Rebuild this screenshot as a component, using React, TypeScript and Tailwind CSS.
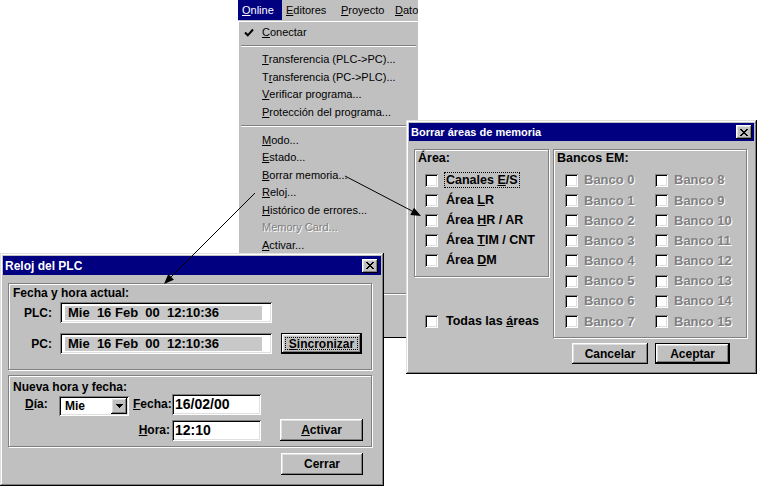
import React from "react";

const frameWin =
  "shadow-[inset_-1px_-1px_0_#000,inset_1px_1px_0_#dfdfdf,inset_-2px_-2px_0_#808080,inset_2px_2px_0_#fff]";
const raised =
  "shadow-[inset_-1px_-1px_0_#000,inset_1px_1px_0_#fff,inset_-2px_-2px_0_#808080,inset_2px_2px_0_#dfdfdf]";
const sunken =
  "shadow-[inset_1px_1px_0_#808080,inset_-1px_-1px_0_#fff,inset_2px_2px_0_#000,inset_-2px_-2px_0_#dfdfdf]";
const etched = "border border-[#808080] shadow-[inset_1px_1px_0_#fff,1px_1px_0_#fff]";
const disabled = "text-[#808080] [text-shadow:1px_1px_0_#fff]";

function CloseBtn() {
  return (
    <div className={`w-[16px] h-[14px] bg-[#c0c0c0] flex items-center justify-center ${raised}`}>
      <svg width="8" height="7" viewBox="0 0 8 7" shapeRendering="crispEdges">
        <path d="M0 0h2v1h-2zM6 0h2v1h-2zM1 1h2v1h-2zM5 1h2v1h-2zM2 2h4v1h-4zM3 3h2v1h-2zM2 4h4v1h-4zM1 5h2v1h-2zM5 5h2v1h-2zM0 6h2v1h-2zM6 6h2v1h-2z" fill="#000" />
      </svg>
    </div>
  );
}

function Check() {
  return <span className={`inline-block w-[13px] h-[13px] bg-white shrink-0 ${sunken}`} />;
}

function Button({
  children,
  className = "",
  def = false,
  focus = false,
}: {
  children: React.ReactNode;
  className?: string;
  def?: boolean;
  focus?: boolean;
}) {
  return (
    <div className={`${def ? "border border-black" : ""} ${className} flex`}>
      <div className={`flex-1 bg-[#c0c0c0] flex items-center justify-center ${raised} p-[3px]`}>
        <div
          className={`w-full h-full flex items-center justify-center text-[12px] font-bold ${
            focus ? "border border-dotted border-black" : ""
          }`}
        >
          {children}
        </div>
      </div>
    </div>
  );
}

function MenuItem({ children, dis = false }: { children: React.ReactNode; dis?: boolean }) {
  return (
    <div className={`h-[17.6px] flex items-center pl-[23px] whitespace-nowrap ${dis ? disabled : ""}`}>
      {children}
    </div>
  );
}

function MenuSep() {
  return (
    <div className="h-[10px] flex items-center px-[2px]">
      <div className="w-full h-[2px] border-t border-t-[#808080] border-b border-b-white" />
    </div>
  );
}

function Menu() {
  return (
    <div className="absolute left-[238px] top-0 w-[180px] h-[338px] bg-[#c0c0c0] overflow-hidden text-[11px] text-black">
      <div className="flex h-[21px] items-stretch whitespace-nowrap">
        <div className="w-[44px] pl-[4px] bg-[#000080] text-white flex items-center h-[20px] shrink-0">
          <u>O</u>nline
        </div>
        <div className="w-[57px] pl-[4px] flex items-center h-[20px] shrink-0">
          <u>E</u>ditores
        </div>
        <div className="w-[56px] pl-[2px] flex items-center h-[20px] shrink-0">
          <u>P</u>royecto
        </div>
        <div className="pl-[0px] flex items-center h-[20px] shrink-0">
          <u>D</u>atos
        </div>
      </div>
      <div className="h-[317px] border-t border-l border-t-white border-l-white border-b border-b-black pt-[1px] relative">
        <div className="h-[17.6px] flex items-center pl-[23px] relative">
          <svg className="absolute left-[5px] top-[5px]" width="10" height="9" viewBox="0 0 10 9">
            <path d="M1 4.5 L3.8 7.3 L9 1.5" stroke="#000" strokeWidth="2" fill="none" />
          </svg>
          <span>
            <u>C</u>onectar
          </span>
        </div>
        <MenuSep />
        <MenuItem>
          <u>T</u>ransferencia (PLC-&gt;PC)...
        </MenuItem>
        <MenuItem>
          T<u>r</u>ansferencia (PC-&gt;PLC)...
        </MenuItem>
        <MenuItem>
          <u>V</u>erificar programa...
        </MenuItem>
        <MenuItem>
          <u>P</u>rotección del programa...
        </MenuItem>
        <MenuSep />
        <MenuItem>
          <u>M</u>odo...
        </MenuItem>
        <MenuItem>
          <u>E</u>stado...
        </MenuItem>
        <MenuItem>
          <u>B</u>orrar memoria...
        </MenuItem>
        <MenuItem>
          <u>R</u>eloj...
        </MenuItem>
        <MenuItem>
          <u>H</u>istórico de errores...
        </MenuItem>
        <MenuItem dis>Memory Card...</MenuItem>
        <MenuItem>
          <u>A</u>ctivar...
        </MenuItem>
        <MenuItem>Desactivar...</MenuItem>
        <MenuItem>Configuración...</MenuItem>
        <MenuSep />
        <MenuItem>Opciones...</MenuItem>
        <MenuItem>Información...</MenuItem>
      </div>
    </div>
  );
}

function RelojDialog() {
  return (
    <div
      className={`absolute left-0 top-[253px] w-[384px] h-[233px] bg-[#c0c0c0] p-[3px] ${frameWin} text-black`}
    >
      <div className="h-[19px] bg-[#000080] flex items-center justify-between pl-[2px] pr-[3px]">
        <span className="text-white font-bold text-[12px]">Reloj del PLC</span>
        <CloseBtn />
      </div>
      <div className="px-[5px] pt-[8px] flex flex-col">
        <div className={`w-[364px] h-[87px] ${etched} flex flex-col`}>
          <div className="pt-[2px] pl-[4px] leading-[14px] text-[12px] font-bold">Fecha y hora actual:</div>
          <div className="mt-[2px] flex items-center h-[21px]">
            <div className="w-[43px] text-right text-[12px] font-bold">PLC:</div>
            <div className={`ml-[8px] w-[212px] h-[21px] bg-white ${sunken} pt-[4px] pr-[10px] pb-[3px] pl-[5px]`}>
              <div className="bg-[#c8c8c8] h-full flex items-center pl-[3px] text-[13px] font-bold whitespace-pre">
                Mie  16 Feb  00  12:10:36
              </div>
            </div>
          </div>
          <div className="mt-[10px] flex items-center h-[21px]">
            <div className="w-[43px] text-right text-[12px] font-bold">PC:</div>
            <div className={`ml-[8px] w-[212px] h-[21px] bg-white ${sunken} pt-[4px] pr-[10px] pb-[3px] pl-[5px]`}>
              <div className="bg-[#c8c8c8] h-full flex items-center pl-[3px] text-[13px] font-bold whitespace-pre">
                Mie  16 Feb  00  12:10:36
              </div>
            </div>
            <Button className="ml-[9px] w-[81px] h-[21px]" def focus>
              <u>S</u>incronizar
            </Button>
          </div>
        </div>
        <div className={`mt-[5px] w-[364px] h-[72px] ${etched} flex flex-col`}>
          <div className="pt-[4px] pl-[4px] leading-[14px] text-[12px] font-bold">Nueva hora y fecha:</div>
          <div className="flex items-start h-[21px]">
            <div className="w-[50px] pl-[16px] leading-[21px] text-[12px] font-bold">
              <u>D</u>ía:
            </div>
            <div className={`mt-[2px] w-[70px] h-[20px] bg-white ${sunken} p-[2px] flex items-stretch`}>
              <div className="flex-1 flex items-center pl-[4px] text-[12px] font-bold">Mie</div>
              <div className={`w-[16px] bg-[#c0c0c0] ${raised} flex items-center justify-center`}>
                <svg width="7" height="4" viewBox="0 0 7 4" shapeRendering="crispEdges">
                  <path d="M0 0h7v1h-7zM1 1h5v1h-5zM2 2h3v1h-3zM3 3h1v1h-1z" fill="#000" />
                </svg>
              </div>
            </div>
            <div className="ml-[4px] w-[39px] leading-[21px] text-[12px] font-bold">
              <u>F</u>echa:
            </div>
            <div className={`w-[89px] h-[21px] bg-white ${sunken} flex items-center pl-[3px] text-[14px] font-bold`}>
              16/02/00
            </div>
          </div>
          <div className="mt-[5px] flex items-start h-[21px]">
            <div className="w-[124px]" />
            <div className="w-[39px] text-right pr-[2px] leading-[21px] text-[12px] font-bold">
              <u>H</u>ora:
            </div>
            <div className={`w-[89px] h-[21px] bg-white ${sunken} flex items-center pl-[3px] text-[14px] font-bold`}>
              12:10
            </div>
            <Button className="ml-[19px] -mt-[1px] w-[83px] h-[22px]">
              <u>A</u>ctivar
            </Button>
          </div>
        </div>
        <Button className="mt-[6px] ml-[273px] w-[82px] h-[22px]">Cerrar</Button>
      </div>
    </div>
  );
}

function BorrarDialog() {
  const areas: React.ReactNode[] = [
    <span className="border border-dotted border-black px-[1px] -ml-[2px]">
      Canales <u>E</u>/S
    </span>,
    <span>
      Área <u>L</u>R
    </span>,
    <span>
      Área <u>H</u>R / AR
    </span>,
    <span>
      Área <u>T</u>IM / CNT
    </span>,
    <span>
      Área <u>D</u>M
    </span>,
  ];
  const bancos = Array.from({ length: 16 }, (_, i) => i);
  return (
    <div
      className={`absolute left-[406px] top-[120px] w-[351px] h-[254px] bg-[#c0c0c0] p-[3px] ${frameWin} text-black`}
    >
      <div className="h-[18px] bg-[#000080] flex items-center justify-between pl-[2px] pr-[2px]">
        <span className="text-white font-bold text-[11px]">Borrar áreas de memoria</span>
        <CloseBtn />
      </div>
      <div className="flex pl-[5px] pt-[8px] gap-[4px] text-[12.5px] font-bold">
        <div className="w-[135px] flex flex-col">
          <div className={`h-[128px] ${etched} flex flex-col`}>
            <div className="pt-[1px] pl-[3px] leading-[14px]">Área:</div>
            <div className="mt-[5px] flex flex-col">
              {areas.map((a, i) => (
                <div key={i} className="h-[20.2px] flex items-center pl-[10px]">
                  <Check />
                  <span className="ml-[8px] whitespace-nowrap">{a}</span>
                </div>
              ))}
            </div>
          </div>
          <div className="mt-[34px] h-[20px] flex items-center pl-[11px]">
            <Check />
            <span className="ml-[8px] whitespace-nowrap">
              Todas las <u>á</u>reas
            </span>
          </div>
        </div>
        <div className="w-[194px] flex flex-col">
          <div className={`h-[189px] ${etched} flex flex-col`}>
            <div className="pt-[1px] pl-[3px] leading-[14px]">Bancos EM:</div>
            <div className="mt-[5px] flex">
              {[0, 1].map((c) => (
                <div key={c} className="w-[90px] flex flex-col">
                  {bancos.slice(c * 8, c * 8 + 8).map((b) => (
                    <div key={b} className="h-[20.2px] flex items-center pl-[11px]">
                      <Check />
                      <span className={`ml-[6px] whitespace-nowrap text-[13px] ${disabled}`}>Banco {b}</span>
                    </div>
                  ))}
                </div>
              ))}
            </div>
          </div>
          <div className="mt-[5px] flex pl-[19px] gap-[7px]">
            <Button className="w-[76px] h-[21px]">Cancelar</Button>
            <Button className="w-[75px] h-[21px]" def>
              Aceptar
            </Button>
          </div>
        </div>
      </div>
    </div>
  );
}

function Arrows() {
  return (
    <svg className="absolute left-0 top-0 pointer-events-none" width="757" height="486" viewBox="0 0 757 486">
      <line x1="255" y1="193" x2="170" y2="278" stroke="#000" strokeWidth="1" />
      <polygon points="164,284 173.9,279.7 168.3,274.1" fill="#000" />
      <line x1="345" y1="176" x2="413" y2="211.5" stroke="#000" strokeWidth="1" />
      <polygon points="421,216 410.3,214.9 414,207.8" fill="#000" />
    </svg>
  );
}

export default function App() {
  return (
    <div className="relative w-[757px] h-[486px] bg-white overflow-hidden [font-family:'Liberation_Sans',Arial,sans-serif]">
      <Menu />
      <RelojDialog />
      <BorrarDialog />
      <Arrows />
    </div>
  );
}
